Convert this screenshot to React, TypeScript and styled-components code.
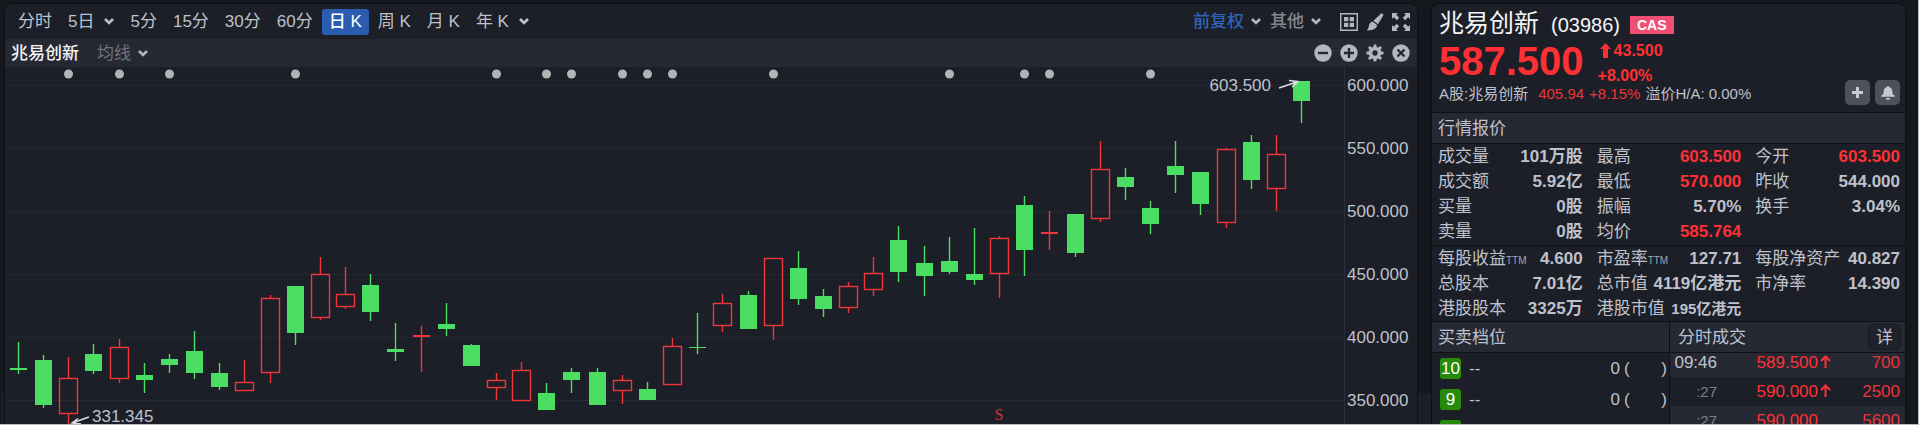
import React, { useLayoutEffect, useRef, useState } from "react";
import styled, { createGlobalStyle, css } from "styled-components";

const c = {
  page: "#14171b",
  panel: "#1c1f27",
  band: "#262833",
  rule: "#0e1016",
  grid: "#242830",
  text: "#bfc1cc",
  dim: "#7d808a",
  icon: "#b4b7bb",
  white: "#f4f5f8",
  red: "#ff3034",
  softRed: "#e8353a",
  green: "#4adf62",
  blue: "#2a5db0",
};

const GlobalStyle = createGlobalStyle`
  *, *::before, *::after { box-sizing: border-box; }
  body {
    margin: 0;
    background: ${c.page};
    color: ${c.text};
    font: 17px/25px "Liberation Sans", "Noto Sans CJK SC", sans-serif;
  }
  button { font: inherit; color: inherit; border: 0; background: none; padding: 0; cursor: pointer; }
  h1, h2, dl, dt, dd { margin: 0; font: inherit; }
`;

const Screen = styled.div`
  display: flex;
  height: 100vh;
  overflow: hidden;
  border-right: 1px solid #b9bac0;
  border-bottom: 1px solid #b9bac0;
`;

const Gutter = styled.div<{ $width: number; $tail?: boolean }>`
  flex: 0 0 ${(p) => p.$width}px;
  display: flex;
  flex-direction: column;
  justify-content: flex-end;
  &::after {
    content: "";
    height: ${(p) => (p.$tail ? 31 : 0)}px;
    margin: 0 1px;
    background: ${c.panel};
  }
`;

const panel = css`
  margin-top: 4px;
  display: flex;
  flex-direction: column;
  background: ${c.panel};
  border-radius: 6px 6px 0 0;
  box-shadow: 0 0 0 1px ${c.rule};
`;

const ChartPanel = styled.main`
  ${panel}
  flex: 1;
  min-width: 0;
`;

const QuotePanel = styled.aside`
  ${panel}
  flex: 0 0 473px;
  overflow: hidden;
`;

/* ---------- chart header ---------- */

const Toolbar = styled.div`
  display: flex;
  align-items: center;
  justify-content: space-between;
  height: 35px;
  padding: 0 7px 0 6px;
`;

const Periods = styled.nav`
  display: flex;
  gap: 2px;
`;

const PeriodButton = styled.button<{ $active?: boolean }>`
  display: flex;
  align-items: center;
  gap: 10px;
  height: 26px;
  padding: 0 7px;
  border-radius: 3px;
  white-space: nowrap;
  ${(p) => p.$active && `background: ${c.blue}; color: #fff; font-weight: 500;`}
`;

const Tools = styled.div`
  display: flex;
  align-items: center;
`;

const MenuButton = styled.button<{ $color: string; $strong?: boolean }>`
  display: flex;
  align-items: center;
  gap: 7px;
  margin-right: 9px;
  color: ${(p) => p.$color};
  font-weight: ${(p) => (p.$strong ? 500 : 400)};
  white-space: nowrap;
  svg { color: ${c.icon}; }
`;

const IconRow = styled.div<{ $inset?: boolean }>`
  display: flex;
  gap: 8px;
  margin-left: ${(p) => (p.$inset ? 10 : 0)}px;
`;

const IconButton = styled.button`
  display: flex;
  width: 18px;
  height: 18px;
  color: ${c.icon};
`;

const Legend = styled.div`
  display: flex;
  align-items: center;
  justify-content: space-between;
  height: 28px;
  padding: 0 7px 0 6px;
  background: ${c.band};
`;

const LegendName = styled.span`
  margin-right: 18px;
  color: ${c.white};
  font-weight: 500;
`;

/* ---------- plot ---------- */

const PlotRow = styled.div`
  display: flex;
  flex: 1;
  min-height: 0;
  overflow: hidden;
`;

const PlotArea = styled.div`
  flex: 1;
  min-width: 0;
  border-right: 1px solid #2b2e37;
`;

const PlotSvg = styled.svg`
  display: block;
  width: 100%;
  height: 100%;
  text { font-size: 17px; fill: ${c.text}; }
`;

const SplitMark = styled.text`
  && {
    font-family: "Liberation Serif", serif;
    font-size: 16px;
    fill: #d0363c;
  }
`;

const Axis = styled.ol`
  flex: 0 0 72px;
  margin: 0;
  padding: 6px 0 0 2px;
  list-style: none;
`;

const AxisLabel = styled.li`
  height: 63px;
`;

/* ---------- quote panel ---------- */

const Summary = styled.header`
  display: grid;
  grid-template-columns: 1fr auto;
  align-items: end;
  flex: none;
  height: 108px;
  padding: 4px 5px 7px 7px;
`;

const SummaryText = styled.div`
  align-self: start;
`;

const TitleRow = styled.div`
  display: flex;
  align-items: center;
  height: 30px;
  color: ${c.white};
`;

const StockName = styled.h1`
  font-size: 25px;
`;

const StockCode = styled.span`
  margin: 4px 10px 0 12px;
  font-size: 20px;
`;

const Badge = styled.span`
  margin-top: 3px;
  padding: 0 7px;
  background: #ee5074;
  color: #fff;
  font-size: 14px;
  font-weight: 700;
  line-height: 18px;
`;

const PriceRow = styled.div`
  display: flex;
  color: ${c.red};
  font-weight: 700;
`;

const LastPrice = styled.strong`
  margin-right: 14px;
  font-size: 40px;
  line-height: 46px;
`;

const Change = styled.div`
  display: flex;
  flex-direction: column;
  font-size: 16px;
  line-height: 25px;
  svg { display: inline-block; margin: 0 3px 0 2px; vertical-align: -2px; }
`;

const PairRow = styled.p`
  display: flex;
  gap: 5px;
  margin: 0;
  font-size: 15px;
  line-height: 12px;
  white-space: nowrap;
`;

const PairName = styled.span`
  margin-right: 5px;
`;

const PairFigure = styled.span`
  color: ${c.softRed};
`;

const Actions = styled.div`
  display: flex;
  gap: 5px;
`;

const ActionButton = styled.button`
  display: flex;
  align-items: center;
  justify-content: center;
  width: 25px;
  height: 25px;
  border-radius: 5px;
  background: #4b525c;
  color: #c6c8d2;
`;

const Band = styled.div<{ $inset?: number }>`
  display: flex;
  align-items: center;
  justify-content: space-between;
  flex: none;
  height: 32px;
  padding: 0 4px 0 ${(p) => p.$inset ?? 6}px;
  border: solid ${c.rule};
  border-width: 1px 0;
  background: ${c.band};
`;

const Stats = styled.dl`
  display: grid;
  grid-template-columns: repeat(3, 1fr);
  column-gap: 14px;
  flex: none;
  padding: 0 5px 0 6px;
  & + & { border-top: 1px solid ${c.rule}; margin-top: 1px; }
`;

const Stat = styled.div`
  display: flex;
  justify-content: space-between;
  height: 25px;
  white-space: nowrap;
`;

const Suffix = styled.small`
  font-size: 10px;
  line-height: 1;
  color: #a3a5ae;
`;

const StatValue = styled.dd<{ $up?: boolean; $compact?: boolean }>`
  color: ${(p) => (p.$up ? c.red : c.text)};
  font-size: ${(p) => (p.$compact ? 15 : 17)}px;
  font-weight: 700;
`;

const Split = styled.div`
  display: grid;
  grid-template-columns: 237px 1fr;
  flex: 1;
  min-height: 0;
`;

const DepthPane = styled.section`
  display: flex;
  flex-direction: column;
  min-height: 0;
  overflow: hidden;
`;

const TradePane = styled(DepthPane)`
  border-left: 1px solid ${c.rule};
`;

const DetailButton = styled.button`
  width: 33px;
  height: 26px;
  border: 1px solid #191b23;
  border-radius: 5px;
  background: #20222b;
`;

const DepthList = styled.ol`
  margin: 0;
  padding: 0 2px 0 8px;
  list-style: none;
`;

const DepthRow = styled.li`
  display: flex;
  align-items: center;
  height: 31px;
`;

const Level = styled.span`
  width: 21px;
  margin-right: 8px;
  border-radius: 3px;
  background: #278a0b;
  color: #fff;
  line-height: 21px;
  text-align: center;
`;

const DepthPrice = styled.span`
  flex: 1;
`;

const Orders = styled.span`
  display: flex;
  justify-content: space-between;
  width: 43px;
  margin-left: 4px;
`;

const Scroller = styled.div`
  overflow: hidden;
  flex: 1;
`;

const Trades = styled.table`
  width: 100%;
  margin-top: -5px;
  border-collapse: collapse;
  table-layout: fixed;
  tr:nth-child(odd) { background: ${c.band}; }
  td { height: 29px; padding: 0; text-align: right; color: ${c.softRed}; }
  td:last-child { padding-right: 5px; }
`;

const TimeCell = styled.td<{ $dim?: boolean }>`
  width: 47px;
  && { color: ${(p) => (p.$dim ? c.dim : c.text)}; }
  font-size: ${(p) => (p.$dim ? 15 : 17)}px;
`;

const PriceCell = styled.td`
  width: 114px;
  && { color: ${c.red}; }
`;

const Tick = styled.span`
  display: inline-block;
  width: 13px;
  text-align: left;
  svg { margin-left: 2px; }
`;

/* ---------- icons ---------- */

const Chevron = () => (
  <svg width="10" height="7" viewBox="0 0 10 7" fill="none" stroke="currentColor" strokeWidth="2.6">
    <path d="M1 1l4 4 4-4" />
  </svg>
);

const GridIcon = () => (
  <svg width="18" height="18" viewBox="0 0 18 18" fill="currentColor">
    <path d="M.7.7h16.6v16.6H.7z" fill="none" stroke="currentColor" strokeWidth="1.4" />
    <path d="M4 4h4.3v4.3H4zM9.7 4H14v4.3H9.7zM4 9.7h4.3V14H4zM9.7 9.7H14V14H9.7z" />
  </svg>
);

const BrushIcon = () => (
  <svg width="18" height="18" viewBox="0 0 18 18" fill="currentColor">
    <path d="M14.6.9c1.3-1.2 3.3.2 2.5 1.9L11.9 11.2 7.4 7.7z" />
    <path d="M6.5 8.6l4.6 3.5c-.3 3.4-3.700 5.700-10.600 5.400 2.400-1.500 1.900-3.400 2.500-5.300.6-1.800 1.900-3 3.500-3.600z" />
  </svg>
);

const ExpandIcon = () => (
  <svg width="18" height="18" viewBox="0 0 18 18" fill="currentColor">
    {[0, 90, 180, 270].map((a) => (
      <path key={a} transform={`rotate(${a} 9 9)`} d="M0 0h6L4.200 1.800l3 3-2.400 2.400-3-3L0 6z" />
    ))}
  </svg>
);

const Disc = ({ children }: { children: React.ReactNode }) => (
  <svg width="18" height="18" viewBox="0 0 18 18">
    <circle cx="9" cy="9" r="8.7" fill="currentColor" />
    <g stroke={c.band} strokeWidth="2.4" fill="none">{children}</g>
  </svg>
);

const GearIcon = () => (
  <svg width="18" height="18" viewBox="0 0 18 18" fill="currentColor">
    {[0, 45, 90, 135].map((a) => (
      <path key={a} transform={`rotate(${a} 9 9)`} d="M7.700.4h2.600l.6 4v9.200l-.6 4H7.700l-.6-4V4.400z" />
    ))}
    <circle cx="9" cy="9" r="6.2" />
    <circle cx="9" cy="9" r="2.7" fill={c.band} />
  </svg>
);

const UpBlock = () => (
  <svg width="11" height="15" viewBox="0 0 11 15" fill="currentColor">
    <path d="M5.500 0L11 6H8v9H3V6H0z" />
  </svg>
);

const UpThin = () => (
  <svg width="11" height="13" viewBox="0 0 11 13" fill="none" stroke="currentColor" strokeWidth="2">
    <path d="M5.500 13V1.600M1 6l4.500-4.500L10 6" />
  </svg>
);

const PlusIcon = () => (
  <svg width="11" height="11" viewBox="0 0 11 11" stroke="currentColor" strokeWidth="3">
    <path d="M5.500 0v11M0 5.500h11" />
  </svg>
);

const BellIcon = () => (
  <svg width="14" height="14" viewBox="0 0 14 14" fill="currentColor">
    <path d="M7 0c.7 0 1.100.5 1.200 1.200C10.300 1.700 11.400 3.400 11.400 5.400c0 2.400.5 3.300 2.400 4.200v1.200H.2V9.600c1.900-.9 2.400-1.800 2.400-4.200 0-2 1.100-3.700 3.200-4.200C5.900.5 6.300 0 7 0z" />
    <path d="M4.800 12h4.400c-.3 1.200-1.100 2-2.200 2s-1.900-.8-2.200-2z" />
  </svg>
);

/* ---------- data ---------- */

// One daily candle: rising flag, then high, body top, body bottom and low in plot pixels.
type Candle = [0 | 1, number, number, number, number];

const candles: Candle[] = [
  [0, 275, 301, 303, 307], [0, 288, 293, 338, 341], [1, 290, 311, 347, 357],
  [0, 277, 287, 304, 307], [1, 272, 280, 312, 316], [0, 296, 308, 313, 326],
  [0, 287, 292, 298, 306], [0, 264, 284, 306, 312], [0, 296, 306, 320, 323],
  [1, 293, 315, 324, 324], [1, 228, 231, 306, 316], [0, 219, 219, 266, 278],
  [1, 190, 207, 251, 253], [1, 200, 227, 240, 242], [0, 207, 218, 245, 254],
  [0, 256, 282, 285, 294], [1, 259, 268, 270, 305], [0, 236, 257, 262, 269],
  [0, 277, 278, 299, 299], [1, 306, 313, 321, 333], [1, 295, 303, 334, 334],
  [0, 316, 326, 343, 343], [0, 301, 305, 313, 326], [0, 301, 305, 338, 338],
  [1, 308, 313, 324, 337], [0, 315, 322, 333, 333], [1, 271, 279, 318, 318],
  [0, 246, 280, 281, 287], [1, 227, 236, 259, 265], [0, 224, 228, 262, 262],
  [1, 191, 191, 259, 273], [0, 184, 201, 232, 238], [0, 222, 229, 242, 250],
  [1, 215, 219, 241, 246], [1, 190, 206, 223, 229], [0, 159, 173, 205, 215],
  [0, 179, 196, 209, 229], [0, 170, 194, 205, 207], [0, 161, 207, 213, 218],
  [1, 169, 171, 207, 231], [0, 129, 138, 183, 209], [1, 144, 165, 167, 183],
  [0, 147, 147, 186, 190], [1, 74, 102, 152, 155], [0, 101, 110, 120, 133],
  [0, 134, 141, 157, 167], [0, 74, 99, 108, 126], [0, 105, 105, 137, 148],
  [1, 81, 82, 156, 161], [0, 68, 75, 113, 122], [1, 68, 87, 122, 144],
  [0, 14, 14, 34, 56],
];

const eventDays = [2, 4, 6, 11, 19, 21, 22, 24, 25, 26, 30, 37, 40, 41, 45];
const axisPrices = ["600.000", "550.000", "500.000", "450.000", "400.000", "350.000"];
const FIRST_GRID = 18;
const GRID_STEP = 63;

type StatItem = { label: string; suffix?: string; value: string; up?: boolean; compact?: boolean };

const quoteStats: StatItem[] = [
  { label: "成交量", value: "101万股" }, { label: "最高", value: "603.500", up: true }, { label: "今开", value: "603.500", up: true },
  { label: "成交额", value: "5.92亿" }, { label: "最低", value: "570.000", up: true }, { label: "昨收", value: "544.000" },
  { label: "买量", value: "0股" }, { label: "振幅", value: "5.70%" }, { label: "换手", value: "3.04%" },
  { label: "卖量", value: "0股" }, { label: "均价", value: "585.764", up: true },
];

const valueStats: StatItem[] = [
  { label: "每股收益", suffix: "TTM", value: "4.600" }, { label: "市盈率", suffix: "TTM", value: "127.71" }, { label: "每股净资产", value: "40.827" },
  { label: "总股本", value: "7.01亿" }, { label: "总市值", value: "4119亿港元" }, { label: "市净率", value: "14.390" },
  { label: "港股股本", value: "3325万" }, { label: "港股市值", value: "195亿港元", compact: true },
];

const periods: { label: string; menu?: boolean; active?: boolean }[] = [
  { label: "分时" }, { label: "5日", menu: true }, { label: "5分" }, { label: "15分" }, { label: "30分" },
  { label: "60分" }, { label: "日 K", active: true }, { label: "周 K" }, { label: "月 K" }, { label: "年 K", menu: true },
];

const trades = [
  { time: "09:46", price: "589.500", up: true, volume: "700" },
  { time: ":27", price: "590.000", up: true, volume: "2500" },
  { time: ":27", price: "590.000", up: false, volume: "5600" },
];

/* ---------- parts ---------- */

function CandleChart() {
  const ref = useRef<HTMLDivElement>(null);
  const [width, setWidth] = useState(1340);

  useLayoutEffect(() => {
    const node = ref.current;
    if (!node) return;
    const measure = () => setWidth(node.clientWidth);
    measure();
    const observer = new ResizeObserver(measure);
    observer.observe(node);
    return () => observer.disconnect();
  }, []);

  const left = 13;
  const step = (width - left - 43) / (candles.length - 1);
  const xOf = (i: number) => Math.round(left + i * step);
  const last = xOf(candles.length - 1);
  const lowest = xOf(2);

  return (
    <PlotArea ref={ref}>
      <PlotSvg role="img" aria-label="日K线图">
        {axisPrices.map((p, i) => (
          <rect key={p} x="0" y={FIRST_GRID + i * GRID_STEP} width="100%" height="1" fill={c.grid} />
        ))}
        {eventDays.map((day) => (
          <circle key={day} cx={xOf(day) + 0.5} cy="7" r="4.5" fill="#b2b4b6" />
        ))}
        {candles.map(([up, high, top, bottom, low], i) => {
          const x = xOf(i);
          const color = up ? "#f0363b" : c.green;
          return (
            <g key={i} fill={color}>
              {up && bottom - top > 3 ? (
                <>
                  <rect x={x - 0.2} y={high} width="1.4" height={top - high} />
                  <rect x={x - 0.2} y={bottom} width="1.4" height={low - bottom} />
                  <rect x={x - 8.5} y={top + 0.5} width="18" height={bottom - top - 1} fill="none" stroke={color} strokeWidth="1.4" />
                </>
              ) : (
                <>
                  <rect x={x - 0.2} y={high} width="1.4" height={low - high} />
                  <rect x={x - 8} y={top} width="17" height={bottom - top} />
                </>
              )}
            </g>
          );
        })}
        <text x={last - 30} y="24" textAnchor="end">603.500</text>
        <g fill="none" stroke="#dcdde4" strokeWidth="1.5">
          <path d={`M${last - 22} 21L${last - 3} 14.5M${last - 12} 13.5l9 1-6 5.5`} />
          <path d={`M${lowest + 21} 350L${lowest + 4} 356M${lowest + 10} 351.5l-6 4.5 9 1`} />
        </g>
        <text x={lowest + 24} y="355">331.345</text>
        <SplitMark x={xOf(39)} y="353" textAnchor="middle">S</SplitMark>
      </PlotSvg>
    </PlotArea>
  );
}

function StatGrid({ items }: { items: StatItem[] }) {
  return (
    <Stats>
      {items.map((s) => (
        <Stat key={s.label}>
          <dt>{s.label}{s.suffix && <Suffix>{s.suffix}</Suffix>}</dt>
          <StatValue $up={s.up} $compact={s.compact}>{s.value}</StatValue>
        </Stat>
      ))}
    </Stats>
  );
}

export default function App() {
  return (
    <>
      <GlobalStyle />
      <Screen>
        <Gutter $width={5} $tail />
        <ChartPanel>
          <Toolbar>
            <Periods>
              {periods.map((p) => (
                <PeriodButton key={p.label} $active={p.active}>
                  {p.label}{p.menu && <Chevron />}
                </PeriodButton>
              ))}
            </Periods>
            <Tools>
              <MenuButton $color="#2f63b8" $strong>前复权<Chevron /></MenuButton>
              <MenuButton $color="#858891" $strong>其他<Chevron /></MenuButton>
              <IconRow $inset>
                <IconButton aria-label="多图"><GridIcon /></IconButton>
                <IconButton aria-label="画线"><BrushIcon /></IconButton>
                <IconButton aria-label="全屏"><ExpandIcon /></IconButton>
              </IconRow>
            </Tools>
          </Toolbar>
          <Legend>
            <Tools>
              <LegendName>兆易创新</LegendName>
              <MenuButton $color="#70737d">均线<Chevron /></MenuButton>
            </Tools>
            <IconRow>
              <IconButton aria-label="缩小"><Disc><path d="M4 9h10" /></Disc></IconButton>
              <IconButton aria-label="放大"><Disc><path d="M4 9h10M9 4v10" /></Disc></IconButton>
              <IconButton aria-label="设置"><GearIcon /></IconButton>
              <IconButton aria-label="关闭"><Disc><path d="M5.5 5.5l7 7M12.5 5.5l-7 7" /></Disc></IconButton>
            </IconRow>
          </Legend>
          <PlotRow>
            <CandleChart />
            <Axis>
              {axisPrices.map((p) => <AxisLabel key={p}>{p}</AxisLabel>)}
            </Axis>
          </PlotRow>
        </ChartPanel>
        <Gutter $width={15} $tail />
        <QuotePanel>
          <Summary>
            <SummaryText>
              <TitleRow>
                <StockName>兆易创新</StockName>
                <StockCode>(03986)</StockCode>
                <Badge>CAS</Badge>
              </TitleRow>
              <PriceRow>
                <LastPrice>587.500</LastPrice>
                <Change>
                  <span><UpBlock />43.500</span>
                  <span>+8.00%</span>
                </Change>
              </PriceRow>
              <PairRow>
                <PairName>A股:兆易创新</PairName>
                <PairFigure>405.94</PairFigure>
                <PairFigure>+8.15%</PairFigure>
                <span>溢价H/A: 0.00%</span>
              </PairRow>
            </SummaryText>
            <Actions>
              <ActionButton aria-label="添加自选"><PlusIcon /></ActionButton>
              <ActionButton aria-label="提醒"><BellIcon /></ActionButton>
            </Actions>
          </Summary>
          <Band><h2>行情报价</h2></Band>
          <StatGrid items={quoteStats} />
          <StatGrid items={valueStats} />
          <Split>
            <DepthPane>
              <Band><h2>买卖档位</h2></Band>
              <DepthList>
                {[10, 9, 8].map((n) => (
                  <DepthRow key={n}>
                    <Level>{n}</Level>
                    <DepthPrice>--</DepthPrice>
                    <span>0</span>
                    <Orders><span>(</span><span>)</span></Orders>
                  </DepthRow>
                ))}
              </DepthList>
            </DepthPane>
            <TradePane>
              <Band $inset={8}>
                <h2>分时成交</h2>
                <DetailButton>详</DetailButton>
              </Band>
              <Scroller>
                <Trades>
                  <tbody>
                    {trades.map((t, i) => (
                      <tr key={i}>
                        <TimeCell $dim={t.time.startsWith(":")}>{t.time}</TimeCell>
                        <PriceCell>{t.price}<Tick>{t.up && <UpThin />}</Tick></PriceCell>
                        <td>{t.volume}</td>
                      </tr>
                    ))}
                  </tbody>
                </Trades>
              </Scroller>
            </TradePane>
          </Split>
        </QuotePanel>
        <Gutter $width={13} />
      </Screen>
    </>
  );
}
